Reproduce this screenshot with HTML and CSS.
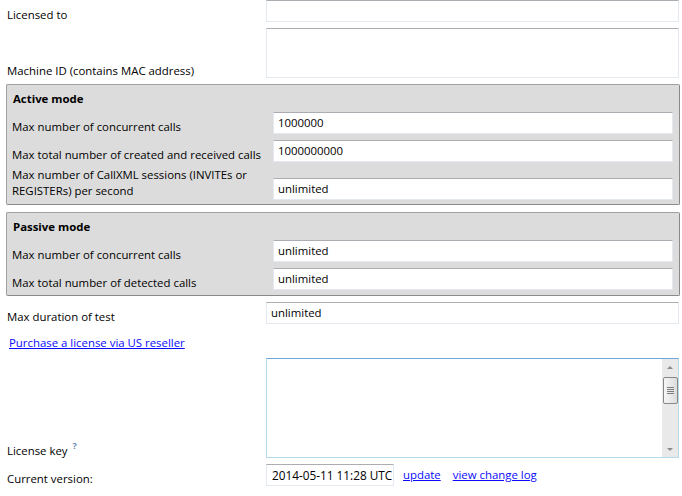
FILE: index.html
```html
<!DOCTYPE html>
<html>
<head>
<meta charset="utf-8">
<link rel="stylesheet" href="styles.css">
</head>
<body>
<div class="form">
  <div class="row">
    <div class="label">Licensed to</div>
    <div class="field"><div class="input"></div></div>
  </div>
  <div class="row">
    <div class="label">Machine ID (contains MAC address)</div>
    <div class="field"><div class="input area-sm"></div></div>
  </div>

  <div class="group">
    <div class="group-title">Active mode</div>
    <div class="grow">
      <div class="label">Max number of concurrent calls</div>
      <div class="field"><div class="input">1000000</div></div>
    </div>
    <div class="grow">
      <div class="label">Max total number of created and received calls</div>
      <div class="field"><div class="input">1000000000</div></div>
    </div>
    <div class="grow">
      <div class="label label-wrap">Max number of CallXML sessions (INVITEs or REGISTERs) per second</div>
      <div class="field"><div class="input">unlimited</div></div>
    </div>
  </div>

  <div class="group group-passive">
    <div class="group-title">Passive mode</div>
    <div class="grow">
      <div class="label">Max number of concurrent calls</div>
      <div class="field"><div class="input">unlimited</div></div>
    </div>
    <div class="grow">
      <div class="label">Max total number of detected calls</div>
      <div class="field"><div class="input">unlimited</div></div>
    </div>
  </div>

  <div class="row row-duration">
    <div class="label">Max duration of test</div>
    <div class="field"><div class="input">unlimited</div></div>
  </div>

  <div class="link-row"><a href="#" class="link">Purchase a license via US reseller</a></div>

  <div class="row row-key">
    <div class="label">License key <sup class="help">?</sup></div>
    <div class="field">
      <div class="keybox">
        <div class="keytext"></div>
        <div class="scrollbar">
          <div class="arrow arrow-up"></div>
          <div class="thumb"><span></span><span></span><span></span><span></span></div>
          <div class="track"></div>
          <div class="arrow arrow-down"></div>
        </div>
      </div>
    </div>
  </div>

  <div class="row row-version">
    <div class="label">Current version:</div>
    <div class="field version-field">
      <div class="input version">2014-05-11 11:28 UTC</div>
      <a href="#" class="link">update</a>
      <a href="#" class="link">view change log</a>
    </div>
  </div>
</div>
</body>
</html>
```

FILE: styles.css
```css
html, body {
  margin: 0;
  padding: 0;
  background: #ffffff;
}

body {
  font-family: "Open Sans", "Noto Sans", "Liberation Sans", sans-serif;
  font-size: 11.4px;
  color: #000000;
  line-height: 16px;
}

.form {
  width: 682px;
  display: flex;
  flex-direction: column;
}

.row {
  display: grid;
  grid-template-columns: 259px 413px;
  align-items: end;
  padding-left: 7px;
  margin-bottom: 6px;
}

.label {
  white-space: nowrap;
  margin-bottom: -1px;
}

.label-wrap {
  white-space: normal;
  width: 240px;
}

.input {
  box-sizing: border-box;
  height: 22px;
  border: 1px solid #e3e9ef;
  border-top-color: #abadb3;
  background: #ffffff;
  padding: 2px 4px 0;
  white-space: nowrap;
  overflow: hidden;
}

.area-sm {
  height: 50px;
}

.group {
  box-sizing: border-box;
  width: 674px;
  margin-left: 6px;
  background: #dcdcdc;
  border: 1px solid #a0a0a0;
  border-right-color: #8a8a8a;
  border-bottom-color: #8a8a8a;
  border-radius: 2px;
  padding: 6px 6px 4px 5px;
}

.group-passive {
  margin-top: 7px;
  padding-bottom: 5px;
}

.group-title {
  font-weight: bold;
  margin-bottom: 5px;
  padding-left: 1px;
}

.grow {
  display: grid;
  grid-template-columns: 261px 400px;
  align-items: end;
  margin-bottom: 6px;
}

.grow:last-child {
  margin-bottom: 0;
}

.grow .label-wrap {
  margin-top: -1px;
  margin-bottom: 0;
  padding-bottom: 1px;
}

.row-duration {
  margin-top: 6px;
}

.link-row {
  padding-left: 9px;
  height: 16px;
  margin-top: 5px;
  margin-bottom: 7px;
}

.link {
  color: #0a0aff;
  text-decoration: underline;
}

.help {
  color: #6a8fb3;
  font-size: 9px;
  font-weight: bold;
  vertical-align: top;
  position: relative;
  top: -5px;
  margin-left: 2px;
}

.keybox {
  box-sizing: border-box;
  height: 100px;
  border: 1px solid #b7d9ed;
  border-top-color: #6ea7d8;
  background: #ffffff;
  display: flex;
}

.keytext {
  flex: 1;
}

.scrollbar {
  width: 16px;
  background: #e9e9e9;
  display: flex;
  flex-direction: column;
  align-items: center;
}

.arrow {
  width: 0;
  height: 0;
  border-left: 3px solid transparent;
  border-right: 3px solid transparent;
}

.arrow-up {
  margin-top: 7px;
  border-bottom: 3px solid #8a8a8a;
}

.arrow-down {
  margin-bottom: 6px;
  border-top: 3px solid #8a8a8a;
}

.thumb {
  box-sizing: border-box;
  margin-top: 8px;
  width: 15px;
  height: 27px;
  border: 1px solid #888888;
  border-radius: 2px;
  background: linear-gradient(to right, #f6f6f6, #dcdcdc);
  display: flex;
  flex-direction: column;
  align-items: center;
  justify-content: center;
  gap: 1px;
}

.thumb span {
  display: block;
  width: 7px;
  height: 1px;
  background: #7d7d7d;
}

.track {
  flex: 1;
}

.version-field {
  display: flex;
  align-items: center;
  gap: 9px;
}

.version {
  width: 128px;
  padding-left: 5px;
  font-size: 11.8px;
}

.version-field .link + .link {
  margin-left: 3px;
}
```
